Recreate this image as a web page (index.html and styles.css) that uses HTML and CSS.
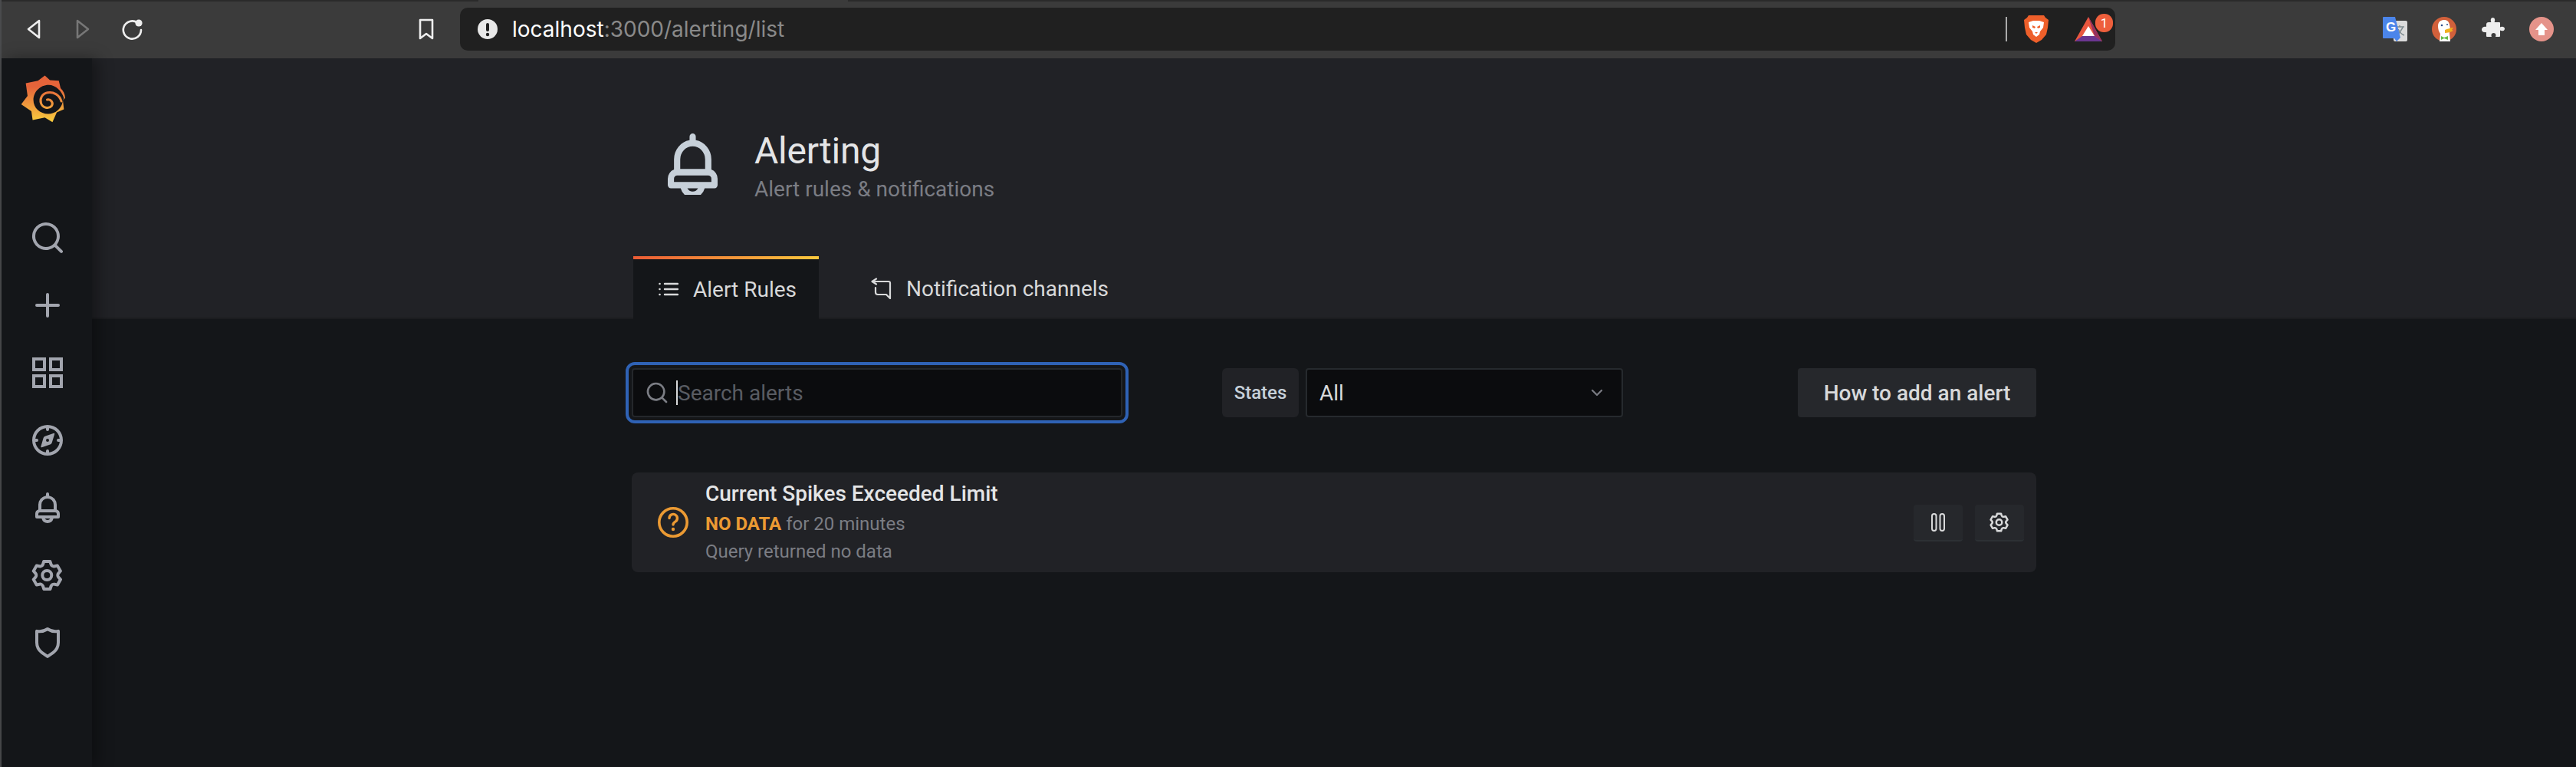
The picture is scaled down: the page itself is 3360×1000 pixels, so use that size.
FILE: index.html
```html
<!DOCTYPE html>
<html lang="en">
<head>
<meta charset="utf-8">
<title>Alerting</title>
<link rel="stylesheet" href="styles.css">
</head>
<body>
<div class="shell">
  <header class="toolbar">
    <div class="nav-group">
      <svg class="tb-icon" viewBox="0 0 20 28"><path d="M17 3 3 14l14 11Z" class="tb-stroke"/></svg>
      <svg class="tb-icon tb-dim" viewBox="0 0 20 28"><path d="M3 3 17 14 3 25Z" class="tb-stroke"/></svg>
      <svg class="tb-icon tb-reload" viewBox="0 0 28 28"><path d="M20 5.500A11.600 11.600 0 1 0 25 15" class="tb-stroke"/><circle cx="22" cy="6" r="4.600" fill="#eee"/></svg>
    </div>
    <svg class="tb-icon tb-bookmark" viewBox="0 0 20 28"><path d="M2 2h16v24l-8-6-8 6Z" class="tb-stroke"/></svg>
    <div class="address">
      <svg class="addr-info" viewBox="0 0 26 26"><circle cx="13" cy="13" r="13" fill="#e8e8e8"/><rect x="11" y="5" width="4" height="11" rx="2" fill="#202020"/><circle cx="13" cy="20" r="2.200" fill="#202020"/></svg>
      <span class="url"><span class="url-host">localhost</span>:3000/alerting/list</span>
      <span class="addr-sep"></span>
      <svg class="brave" viewBox="0 0 32 36"><path d="M6 0h20l2 3 4 3-1 10-2 9-6 7-7 4-7-4-6-7-2-9L0 6l4-3Z" fill="#ee5f2a"/><path d="M6 9l6-2h8l6 2-1 7-4 5-1 4-4 3-4-3-1-4-4-5Z" fill="#fff"/><path d="M11 13l4 2-1 2-3-1ZM21 13l-4 2 1 2 3-1ZM14 22h4l-2 2Z" fill="#ee5f2a"/></svg>
      <span class="bat">
        <svg class="bat-tri" viewBox="0 0 36 32"><path d="M18 0 0 32h36Z" fill="#e9573f"/><path d="M18 0 36 32 26 25Z" fill="#96305f"/><path d="M0 32l10-7h16l10 7Z" fill="#6b3590"/><path d="M18 12l-8 13h16Z" fill="#fff"/></svg>
        <span class="bat-badge">1</span>
      </span>
    </div>
    <div class="extensions">
      <svg class="ext ext-translate" viewBox="0 0 32 32"><rect x="14" y="5" width="18" height="27" rx="2" fill="#dcdcdc"/><path d="M17 13h11M22 11v2M19 25l7-11M20 16c2 4 5 7 8 8" fill="none" stroke="#7d8b90" stroke-width="1.400"/><path d="M1 0h15l7 27-5 5-3-4H1a1 1 0 0 1-1-1V1a1 1 0 0 1 1-1Z" fill="#4b85ea"/><text x="4" y="19" class="ext-g">G</text></svg>
      <svg class="ext ext-duck" viewBox="0 0 32 32"><circle cx="16" cy="16" r="16" fill="#d2603b"/><path d="M8 12c0-6 4-8 8-8s6 2 7 6l1 6-1 5 1 11H10l1-10c-2-3-3-6-3-10Z" fill="#fff"/><circle cx="13" cy="11" r="1.300" fill="#2d4f8e"/><circle cx="20" cy="10" r="1" fill="#2d4f8e"/><path d="M17 17c3-1 8-3 11-3l-2 3 2 1c-3 2-8 3-11 3Z" fill="#f2b01f"/><path d="M12 25l4 2 5-2v5l-5-2-4 2Z" fill="#67bd4a"/></svg>
      <svg class="ext ext-puzzle" viewBox="0 0 30 30"><path d="M9 6h3.500C11 3 12 0 14.500 0S18 3 16.500 6H23a1 1 0 0 1 1 1v5.500c2-1.500 6-1 6 2s-4 3.500-6 2V24a1 1 0 0 1-1 1h-5c1-2 .5-5-2.500-5S12 23 13 25H7a1 1 0 0 1-1-1v-5c-2 .5-6 0-6-3.500S4 11 6 12V9a3 3 0 0 1 3-3Z" fill="#eee"/></svg>
      <svg class="ext ext-up" viewBox="0 0 32 32"><circle cx="16" cy="16" r="16" fill="#e5938a"/><path d="M16 8l8 9h-4v7h-8v-7H8Z" fill="#fff"/></svg>
    </div>
  </header>
  <div class="app">
    <nav class="sidebar">
      <div class="logo-wrap">
        <svg class="logo" viewBox="80 84 178 186">
          <defs><linearGradient id="lg" gradientUnits="userSpaceOnUse" x1="0" y1="130" x2="0" y2="262"><stop offset="0" stop-color="#e5643a"/><stop offset="1" stop-color="#f8c93e"/></linearGradient></defs>
          <path fill="url(#lg)" d="M175 85 195 103 230 105 237 135C248 145 254 158 255 173L246 182 250 218 222 230 205 268 175 250 127 260 122 225 82 198 107 165 100 115 148 105Z"/>
          <path fill="#141619" d="M250 174C242 146 218 122 190 122 156 122 130 150 130 181 130 213 156 236 188 236 216 236 240 214 244 192 246 184 248 178 250 174Z"/>
          <path fill="none" stroke="url(#lg)" stroke-width="9" stroke-linecap="round" d="M240 186C232 160 208 148 186 152 164 156 154 176 160 194 166 212 190 218 202 204 210 192 198 176 184 180"/>
        </svg>
      </div>
      <div class="side-items">
        <a class="side-item"><svg class="side-icon" viewBox="0 0 24 24"><path d="M21.710,20.290,18,16.610A9,9,0,1,0,16.610,18l3.680,3.680a1,1,0,0,0,1.420,0A1,1,0,0,0,21.710,20.290ZM11,18a7,7,0,1,1,7-7A7,7,0,0,1,11,18Z"/></svg></a>
        <a class="side-item"><svg class="side-icon" viewBox="0 0 24 24"><path d="M19,11H13V5a1,1,0,0,0-2,0v6H5a1,1,0,0,0,0,2h6v6a1,1,0,0,0,2,0V13h6a1,1,0,0,0,0-2Z"/></svg></a>
        <a class="side-item"><svg class="side-icon" viewBox="0 0 24 24"><path fill-rule="evenodd" d="M2 2h9v9H2ZM4 4v5h5V4ZM13 2h9v9h-9ZM15 4v5h5V4ZM2 13h9v9H2ZM4 15v5h5v-5ZM13 13h9v9h-9ZM15 15v5h5v-5Z"/></svg></a>
        <a class="side-item"><svg class="side-icon" viewBox="0 0 24 24"><path fill-rule="evenodd" d="M12 2a10 10 0 1 0 0 20 10 10 0 0 0 0-20ZM13 4.070V5a1 1 0 0 1-2 0v-.93A8 8 0 0 0 4.070 11H5a1 1 0 0 1 0 2h-.93A8 8 0 0 0 11 19.930V19a1 1 0 0 1 2 0v.93A8 8 0 0 0 19.930 13H19a1 1 0 0 1 0-2h.93A8 8 0 0 0 13 4.070Z"/><path d="M15.800 7.500 10.400 9.400a2 2 0 0 0-1.100 1.100L7.700 16a.5.5 0 0 0 .6.600l5.400-1.800a2 2 0 0 0 1.100-1.100l1.700-5.500a.5.5 0 0 0-.7-.7ZM12 13a1 1 0 1 1 0-2 1 1 0 0 1 0 2Z"/></svg></a>
        <a class="side-item"><svg class="side-icon" viewBox="0 0 24 24"><path d="M18,13.180V10a6,6,0,0,0-5-5.910V3a1,1,0,0,0-2,0V4.090A6,6,0,0,0,6,10v3.180A3,3,0,0,0,4,16v2a1,1,0,0,0,1,1H8.140a4,4,0,0,0,7.720,0H19a1,1,0,0,0,1-1V16A3,3,0,0,0,18,13.180ZM8,10a4,4,0,0,1,8,0v3H8Zm4,10a2,2,0,0,1-1.720-1h3.440A2,2,0,0,1,12,20Zm6-3H6V16a1,1,0,0,1,1-1H17a1,1,0,0,1,1,1Z"/></svg></a>
        <a class="side-item"><svg class="side-icon" viewBox="0 0 24 24"><path d="M19.900,12.660a1,1,0,0,1,0-1.320L21.180,9.900a1,1,0,0,0,.12-1.170l-2-3.460a1,1,0,0,0-1.070-.48l-1.880.38a1,1,0,0,1-1.150-.66l-.61-1.830A1,1,0,0,0,13.640,2h-4a1,1,0,0,0-1,.68L8.080,4.510a1,1,0,0,1-1.150.66L5,4.790A1,1,0,0,0,4,5.270L2,8.730A1,1,0,0,0,2.100,9.900l1.270,1.440a1,1,0,0,1,0,1.320L2.100,14.100A1,1,0,0,0,2,15.270l2,3.460a1,1,0,0,0,1.070.48l1.880-.38a1,1,0,0,1,1.150.66l.61,1.830a1,1,0,0,0,1,.68h4a1,1,0,0,0,.95-.68l.61-1.830a1,1,0,0,1,1.150-.66l1.880.38a1,1,0,0,0,1.070-.48l2-3.460a1,1,0,0,0-.12-1.170ZM18.410,14l.8.9-1.280,2.220-1.180-.24a3,3,0,0,0-3.450,2L12.920,20H10.360L10,18.860a3,3,0,0,0-3.450-2l-1.180.24L4.070,14.890l.8-.9a3,3,0,0,0,0-4l-.8-.9L5.350,6.890l1.180.24a3,3,0,0,0,3.450-2L10.360,4h2.560l.38,1.140a3,3,0,0,0,3.450,2l1.180-.24,1.280,2.220-.8.9A3,3,0,0,0,18.410,14ZM11.640,8a4,4,0,1,0,4,4A4,4,0,0,0,11.640,8Zm0,6a2,2,0,1,1,2-2A2,2,0,0,1,11.640,14Z"/></svg></a>
        <a class="side-item"><svg class="side-icon" viewBox="0 0 24 24"><path d="M19.630,3.650a1,1,0,0,0-.84-.2,8,8,0,0,1-6.220-1.270,1,1,0,0,0-1.140,0A8,8,0,0,1,5.210,3.450a1,1,0,0,0-.84.2A1,1,0,0,0,4,4.430v7.450a9,9,0,0,0,3.770,7.330l3.650,2.600a1,1,0,0,0,1.160,0l3.650-2.600A9,9,0,0,0,20,11.880V4.430A1,1,0,0,0,19.630,3.650ZM18,11.880a7,7,0,0,1-2.930,5.700L12,19.770l-3.070-2.190A7,7,0,0,1,6,11.880V5.580a10,10,0,0,0,6-1.390,10,10,0,0,0,6,1.390Z"/></svg></a>
      </div>
    </nav>
    <main class="main">
      <section class="page-header">
        <div class="container">
          <div class="heading">
            <svg class="heading-icon" viewBox="4 2 16 19" preserveAspectRatio="none"><path d="M18,13.180V10a6,6,0,0,0-5-5.910V3a1,1,0,0,0-2,0V4.090A6,6,0,0,0,6,10v3.180A3,3,0,0,0,4,16v2a1,1,0,0,0,1,1H8.140a4,4,0,0,0,7.720,0H19a1,1,0,0,0,1-1V16A3,3,0,0,0,18,13.180ZM8,10a4,4,0,0,1,8,0v3H8Zm4,10a2,2,0,0,1-1.720-1h3.440A2,2,0,0,1,12,20Zm6-3H6V16a1,1,0,0,1,1-1H17a1,1,0,0,1,1,1Z"/></svg>
            <div class="heading-text">
              <h1 class="title">Alerting</h1>
              <div class="subtitle">Alert rules &amp; notifications</div>
            </div>
          </div>
          <div class="tabs">
            <a class="tab tab-active">
              <svg class="tab-icon" viewBox="0 0 26 26"><path d="M8 6h17M8 13h17M8 20h17" stroke="#d8d9da" stroke-width="2.400" fill="none" stroke-linecap="round"/><circle cx="1.500" cy="6" r="1.300" fill="#d8d9da"/><circle cx="1.500" cy="13" r="1.300" fill="#d8d9da"/><circle cx="1.500" cy="20" r="1.300" fill="#d8d9da"/></svg>
              Alert Rules
            </a>
            <a class="tab">
              <svg class="tab-icon tab-icon-share" viewBox="0 0 28 28"><path d="M8 1.500 2.500 5 8 8.500M3 5h21a2 2 0 0 1 2 2v20l-5-5H10a3 3 0 0 1-3-3v-6" stroke="#d8d9da" stroke-width="2.200" fill="none" stroke-linecap="round" stroke-linejoin="round"/></svg>
              Notification channels
            </a>
          </div>
        </div>
      </section>
      <section class="page-body">
        <div class="container">
          <div class="filters">
            <div class="search-ring">
              <div class="search-box">
                <svg class="search-icon" viewBox="0 0 24 24"><path d="M21.710,20.290,18,16.610A9,9,0,1,0,16.610,18l3.680,3.680a1,1,0,0,0,1.420,0A1,1,0,0,0,21.710,20.290ZM11,18a7,7,0,1,1,7-7A7,7,0,0,1,11,18Z"/></svg>
                <span class="caret"></span>
                <span class="placeholder">Search alerts</span>
              </div>
            </div>
            <div class="states">
              <span class="states-label">States</span>
              <div class="select">
                <span>All</span>
                <svg class="chevron" viewBox="0 0 16 10"><path d="M2 2l6 6 6-6" fill="none" stroke="#7b7d84" stroke-width="2.200" stroke-linecap="round" stroke-linejoin="round"/></svg>
              </div>
            </div>
            <a class="help-btn">How to add an alert</a>
          </div>
          <article class="rule">
            <svg class="rule-state" viewBox="0 0 40 40"><circle cx="20" cy="20" r="18.200" fill="none" stroke="#eb9a33" stroke-width="3.600"/><path d="M15 14.500a5.200 5.200 0 1 1 7.800 4.600c-1.700 1-2.800 2-2.800 3.900" fill="none" stroke="#eb9a33" stroke-width="3.400" stroke-linecap="round"/><circle cx="20" cy="29" r="2.200" fill="#eb9a33"/></svg>
            <div class="rule-text">
              <div class="rule-title">Current Spikes Exceeded Limit</div>
              <div class="rule-meta"><b class="rule-status">NO DATA</b> for 20 minutes</div>
              <div class="rule-meta">Query returned no data</div>
            </div>
            <div class="rule-actions">
              <a class="icon-btn"><svg class="pause" viewBox="0 0 18 24"><rect x="1" y="1" width="5.500" height="22" rx="2.700" fill="none" stroke="#d8d9da" stroke-width="2"/><rect x="11.500" y="1" width="5.500" height="22" rx="2.700" fill="none" stroke="#d8d9da" stroke-width="2"/></svg></a>
              <a class="icon-btn"><svg class="gear" viewBox="0 0 24 24"><path d="M19.900,12.660a1,1,0,0,1,0-1.320L21.180,9.900a1,1,0,0,0,.12-1.170l-2-3.460a1,1,0,0,0-1.070-.48l-1.880.38a1,1,0,0,1-1.150-.66l-.61-1.830A1,1,0,0,0,13.640,2h-4a1,1,0,0,0-1,.68L8.080,4.510a1,1,0,0,1-1.150.66L5,4.790A1,1,0,0,0,4,5.270L2,8.730A1,1,0,0,0,2.100,9.900l1.270,1.440a1,1,0,0,1,0,1.320L2.100,14.100A1,1,0,0,0,2,15.270l2,3.460a1,1,0,0,0,1.070.48l1.880-.38a1,1,0,0,1,1.150.66l.61,1.830a1,1,0,0,0,1,.68h4a1,1,0,0,0,.95-.68l.61-1.830a1,1,0,0,1,1.150-.66l1.880.38a1,1,0,0,0,1.070-.48l2-3.460a1,1,0,0,0-.12-1.170ZM18.410,14l.8.9-1.280,2.220-1.180-.24a3,3,0,0,0-3.450,2L12.920,20H10.360L10,18.860a3,3,0,0,0-3.450-2l-1.180.24L4.070,14.890l.8-.9a3,3,0,0,0,0-4l-.8-.9L5.350,6.890l1.180.24a3,3,0,0,0,3.450-2L10.360,4h2.560l.38,1.140a3,3,0,0,0,3.450,2l1.180-.24,1.280,2.220-.8.9A3,3,0,0,0,18.410,14ZM11.640,8a4,4,0,1,0,4,4A4,4,0,0,0,11.640,8Zm0,6a2,2,0,1,1,2-2A2,2,0,0,1,11.640,14Z"/></svg></a>
            </div>
          </article>
        </div>
      </section>
    </main>
  </div>
</div>
</body>
</html>
```
FILE: styles.css
```css
* { box-sizing: border-box; }
html, body { margin: 0; padding: 0; height: 100%; overflow: hidden; background: #141619; }
body { font-family: Roboto, "Liberation Sans", sans-serif; color: #d8d9da; }
.shell { width: 3360px; height: 1000px; display: flex; flex-direction: column; border-left: 2px solid #4a4b4d; }

/* Browser chrome */
.toolbar { height: 76px; flex: none; display: flex; align-items: flex-start; background: #3b3b3b; border-top: 2px solid; border-image: linear-gradient(90deg, #2a2a2a 623px, #3b3b3b 623px, #3b3b3b 1104px, #2a2a2a 1104px) 1; padding-top: 8px; }
.nav-group { display: flex; align-items: center; padding: 14px 0 0 32px; gap: 44px; }
.tb-icon { width: 20px; height: 28px; display: block; }
.tb-stroke { fill: none; stroke: #eee; stroke-width: 2.600; stroke-linejoin: round; stroke-linecap: round; }
.tb-dim .tb-stroke { stroke: #777; }
.tb-reload { width: 28px; margin-left: -3px; }
.tb-bookmark { margin: 14px 0 0 359px; }
.address { margin-left: 34px; width: 2159px; height: 56px; background: #202020; border-radius: 10px; display: flex; align-items: center; padding: 0 17px 0 23px; }
.addr-info { width: 26px; height: 26px; flex: none; }
.url { margin-left: 19px; font-family: Inter, Roboto, sans-serif; font-size: 28px; color: #8a8a8a; flex: 1; }
.url-host { color: #fff; }
.addr-sep { width: 2px; height: 32px; background: #aaa; flex: none; }
.brave { width: 32px; height: 36px; margin-left: 22px; flex: none; }
.bat { display: flex; align-items: center; margin-left: 34px; position: relative; }
.bat-tri { width: 36px; height: 32px; display: block; }
.bat-badge { position: absolute; left: 27px; top: -4px; width: 23px; height: 24px; border-radius: 11px; background: #ee5f3c; color: #fff; font-size: 17px; line-height: 24px; text-align: center; }
.extensions { display: flex; align-items: center; margin-left: 349px; padding-top: 12px; }
.ext { display: block; flex: none; }
.ext-translate { width: 32px; height: 32px; }
.ext-g { font-family: "Liberation Sans", sans-serif; font-size: 17px; font-weight: 700; fill: #fff; }
.ext-duck { width: 32px; height: 32px; margin-left: 32px; }
.ext-puzzle { width: 30px; height: 30px; margin-left: 33px; }
.ext-up { width: 32px; height: 32px; margin-left: 32px; }

/* App */
.app { flex: 1; display: flex; min-height: 0; }
.sidebar { width: 118px; flex: none; background: #141619; position: relative; z-index: 1; box-shadow: 8px 0 18px rgba(0, 0, 0, .35); }
.logo-wrap { height: 190px; padding: 22px 0 0 25px; }
.logo { width: 59px; height: 62px; display: block; }
.side-items { display: flex; flex-direction: column; }
.side-item { height: 88px; display: flex; align-items: center; justify-content: center; padding-left: 2px; }
.side-icon { width: 48px; height: 48px; fill: #a2a5ae; display: block; }
.main { flex: 1; min-width: 0; display: flex; flex-direction: column; background: #141619; }
.container { width: 1832px; margin: 0 auto; }

.page-header { height: 340px; flex: none; background: #212226; border-bottom: 2px solid #1c1d20; }
.heading { display: flex; align-items: flex-start; padding: 98px 0 0 47px; height: 258px; }
.heading-icon { width: 65px; height: 80px; fill: #c7d0d9; flex: none; }
.heading-text { margin-left: 48px; margin-top: -5px; }
.title { margin: 0; font-size: 48px; font-weight: 400; line-height: 56px; letter-spacing: -.2px; color: #e4e5e6; }
.subtitle { font-size: 28px; line-height: 36px; margin-top: 4px; color: #7b7d84; }
.tabs { display: flex; height: 82px; padding-left: 2px; }
.tab { display: flex; align-items: center; white-space: nowrap; font-size: 28px; color: #d8d9da; padding: 2px 0 0 33px; height: 82px; }
.tab-active { width: 242px; padding-top: 0; background: #141619; border-top: 4px solid; border-image: linear-gradient(90deg, #eb5b35, #fbc93d) 1; }
.tab + .tab { padding-left: 67px; }
.tab-icon { width: 26px; height: 26px; margin-right: 19px; flex: none; }
.tab-icon-share { width: 28px; height: 28px; }

.page-body { flex: 1; }
.filters { display: flex; align-items: center; height: 64px; margin-top: 64px; }
.search-ring { width: 656px; height: 80px; margin-left: -8px; flex: none; border: 4px solid #2f62b5; border-radius: 12px; padding: 4px; background: #141619; }
.search-box { height: 100%; background: #0b0c0e; border: 2px solid #24272b; border-radius: 4px; display: flex; align-items: center; padding-left: 15px; }
.search-icon { width: 32px; height: 32px; fill: #7b7d84; flex: none; }
.caret { width: 2px; height: 32px; background: #d8d9da; margin-left: 9px; flex: none; }
.placeholder { font-size: 28px; color: #595c63; }
.states { display: flex; align-items: stretch; height: 64px; margin-left: 122px; gap: 9px; }
.states-label { width: 100px; background: #212226; border-radius: 6px; font-size: 24px; font-weight: 500; display: flex; align-items: center; justify-content: center; color: #c7d0d9; }
.select { width: 414px; background: #0b0c0e; border: 2px solid #262a2e; border-radius: 4px; display: flex; align-items: center; justify-content: space-between; padding: 0 24px 0 16px; font-size: 28px; color: #d8d9da; }
.chevron { width: 16px; height: 10px; }
.help-btn { margin-left: auto; width: 311px; height: 64px; background: #26282c; border-radius: 4px; display: flex; align-items: center; justify-content: center; font-size: 28px; font-weight: 500; color: #d8d9da; }

.rule { margin-top: 72px; height: 130px; background: #212226; border-radius: 8px; display: flex; align-items: center; padding: 0 16px 0 34px; }
.rule-state { width: 40px; height: 40px; flex: none; }
.rule-text { margin-left: 22px; flex: 1; }
.rule-title { font-size: 28px; font-weight: 500; line-height: 38px; margin-bottom: 2px; color: #e4e5e6; }
.rule-meta { font-size: 24px; line-height: 36px; color: #7b7d84; }
.rule-status { color: #eb9a33; font-weight: 700; }
.rule-actions { display: flex; gap: 16px; margin-top: 2px; }
.icon-btn { width: 64px; height: 48px; background: #26282c; border-radius: 4px; border-bottom: 2px solid #2c3034; display: flex; align-items: center; justify-content: center; }
.pause { width: 18px; height: 24px; }
.gear { width: 30px; height: 30px; fill: #d8d9da; }
```
